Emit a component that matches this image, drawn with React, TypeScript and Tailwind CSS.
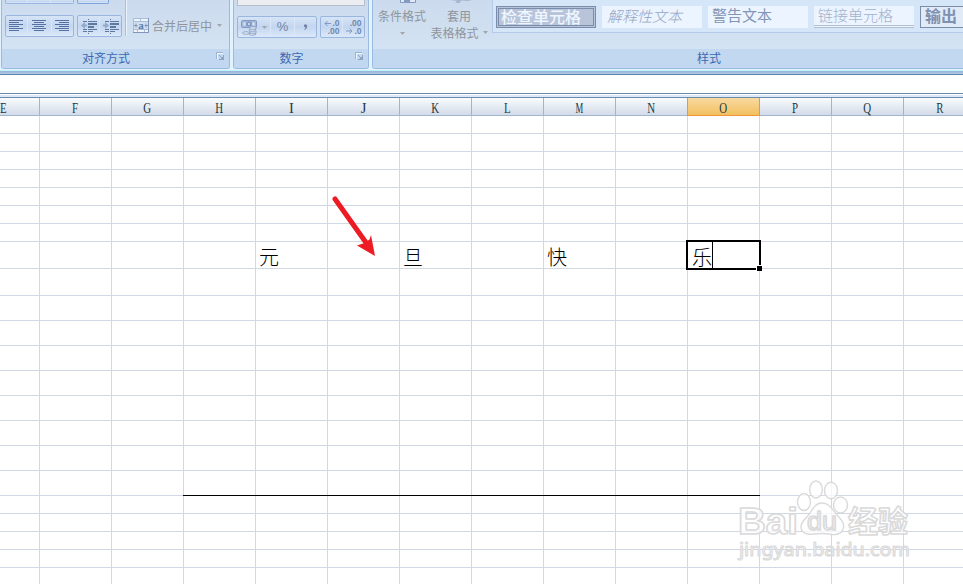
import React from "react";

const sans = "font-['Noto_Sans_CJK_SC',sans-serif]";

const columns = [
  { name: "E", width: "w-[40px]" },
  ..."FGHIJKLMNOPQ".split("").map((name) => ({ name, width: "w-[72px]" })),
  { name: "R", width: "w-[72px]" },
];

const rows = [
  ...Array(7).fill("h-[18px]"),
  "h-[27px]",
  "h-[27px]",
  ...Array(8).fill("h-[25px]"),
  ...Array(5).fill("h-[18px]"),
];

const greeting: Record<string, string> = { I: "元", K: "旦", M: "快", O: "乐" };

function Lines({ kind }: { kind: "left" | "center" | "right" }) {
  const widths = [14, 10, 14, 10, 14, 10];
  return (
    <svg width="16" height="13" viewBox="0 0 16 13" shapeRendering="crispEdges">
      {widths.map((w, i) => (
        <rect
          key={i}
          x={kind === "left" ? 0 : kind === "right" ? 14 - w : (14 - w) / 2}
          y={i * 2}
          width={w}
          height="1"
          fill="#56719f"
        />
      ))}
    </svg>
  );
}

function Indent({ outward }: { outward?: boolean }) {
  return (
    <svg width="16" height="15" viewBox="0 0 16 15" shapeRendering="crispEdges">
      <g fill="#5f799f">
        <path d="M2 2h4v1H2zM7 2h9v1H7zM7 4h9v2H7zM7 7h6v2H7zM2 10h4v1H2zM7 10h9v1H7zM2 12h4v1H2zM7 12h5v1H7z" />
        <path d="M7 0h1v1H7zM7 14h1v1H7z" />
      </g>
      <path
        d={outward ? "M0 6.500l4-3.500v2.500h2v2H4V10z" : "M6 6.500L2 3v2.500H0v2h2V10z"}
        fill="#93a8ca"
        shapeRendering="auto"
      />
    </svg>
  );
}

function MergeIcon() {
  return (
    <svg className="shrink-0" width="16" height="15" viewBox="0 0 16 15">
      <rect x=".5" y=".5" width="15" height="14" fill="#f0f5fc" stroke="#a9bcd9" />
      <path d="M0 3.500h16M0 11.500h16M7.500 0v3.500M4.500 11.500V15M11.500 11.500V15" stroke="#a9bcd9" />
      <rect x="1" y="4" width="14" height="7" fill="#d2dff1" />
      <path d="M1 7.500h3.500M3 5.500v4M15 7.500h-3.500M13 5.500v4" stroke="#7f96b9" />
      <path d="M15.500 0v14.500H0" fill="none" stroke="#7f96b9" />
      <text x="8" y="10.500" textAnchor="middle" fontFamily="Liberation Serif, serif" fontSize="11" fontWeight="bold" fill="#5f7aa4">a</text>
    </svg>
  );
}

function MoneyIcon() {
  return (
    <svg width="17" height="17" viewBox="0 0 17 17">
      <rect x=".5" y="1.500" width="15" height="7" rx="1" fill="#a3b7d8" stroke="#8499bf" />
      <ellipse cx="8" cy="5" rx="3" ry="2.500" fill="#8299c2" />
      <path d="M2.500 3.500h2v3h-2zM11.500 3.500h2v3h-2z" fill="#dbe6f5" />
      <path d="M7 4h2v2H7z" fill="#c3d2e8" />
      <g fill="#dce7f6" stroke="#8499bf" strokeWidth=".8">
        <ellipse cx="5" cy="14" rx="3.500" ry="1.300" />
        <ellipse cx="11.500" cy="15" rx="3.500" ry="1.300" />
        <ellipse cx="12" cy="13" rx="3.500" ry="1.300" />
        <ellipse cx="11.500" cy="11" rx="3.500" ry="1.300" />
        <ellipse cx="12" cy="9" rx="3.500" ry="1.300" />
      </g>
    </svg>
  );
}

function Decimals({ less }: { less?: boolean }) {
  return (
    <svg width="17" height="15" viewBox="0 0 17 15" fontFamily="Liberation Sans, sans-serif" fontSize="8.500" fontWeight="bold" fill="#7287aa">
      <text x="16.500" y="6" textAnchor="end">{less ? ".00" : ".0"}</text>
      <text x="16.500" y="14" textAnchor="end">{less ? ".0" : ".00"}</text>
      <path d={less ? "M1 11h6M4.500 8.500L7 11 4.500 13.500" : "M8 3.500H2M4.500 1L2 3.500 4.500 6"} fill="none" stroke="#8299c0" />
    </svg>
  );
}

function Caret({ className = "" }: { className?: string }) {
  return (
    <svg className={`shrink-0 ${className}`} width="5" height="3" viewBox="0 0 5 3">
      <path d="M0 0h5L2.500 3z" fill="#a3a5aa" />
    </svg>
  );
}

function Launcher() {
  return (
    <svg className="absolute right-[5px] top-[3px]" width="8" height="8" viewBox="0 0 8 8" shapeRendering="crispEdges">
      <path d="M.5 6.500v-6h6" fill="none" stroke="#9db4d1" />
      <path d="M1.500 6.500v-5h5" fill="none" stroke="#eef5fd" />
      <path d="M7.500 3v4.500H3" fill="none" stroke="#8da5c3" />
      <path d="M3 3h1v1H3zM4 4h1v1H4zM5 5h2v2H5z" fill="#8da5c3" />
    </svg>
  );
}

function ButtonGroup({ children, className }: { children: React.ReactNode; className: string }) {
  return (
    <div className={`flex shrink-0 rounded-[2px] border border-[#9ab6de] bg-linear-to-b from-[#d6e4f6] via-[#c3d6f0] to-[#dbe9f9] ${className}`}>
      {children}
    </div>
  );
}

const cellButton = "flex shrink-0 items-center justify-center";
const divider = "border-r border-[#dbe7f6]";

function Group({ title, className, launcher, children }: { title: string; className: string; launcher?: boolean; children: React.ReactNode }) {
  return (
    <section className={`flex h-[69px] shrink-0 flex-col overflow-hidden rounded-b-[3px] border border-t-0 border-[#9abbdf] bg-linear-to-b from-[#cbdaed] to-[#d8e7f5] ${className}`}>
      <div className="flex h-[49px] shrink-0">{children}</div>
      <div className={`relative flex h-[19px] shrink-0 items-center justify-center bg-[#c1d8f0] pb-[2px] text-[12px] leading-[17px] text-[#3c69b3] ${sans}`}>
        <span className={launcher ? "mr-[19px]" : "ml-[79px]"}>{title}</span>
        {launcher && <Launcher />}
      </div>
    </section>
  );
}

function AlignmentGroup() {
  return (
    <Group title="对齐方式" launcher className="ml-px w-[229px]">
      <div className="flex h-[36px] w-[124px] flex-col border-r border-[#a6c0e4] shadow-[1px_0_0_#eaf3fd]">
        <div className="ml-[3px] flex gap-[3px]">
          <ButtonGroup className="h-[4px] w-[69px] rounded-t-none border-t-0"><i className={`w-[22px] ${divider}`} /><i className={`w-[23px] ${divider}`} /></ButtonGroup>
          <ButtonGroup className="h-[4px] w-[32px] rounded-t-none border-t-0 !border-[#7da3da]">{null}</ButtonGroup>
        </div>
        <div className="ml-[3px] mt-[11px] flex gap-[3px]">
          <ButtonGroup className="h-[22px] w-[69px]">
            <span className={`w-[22px] ${cellButton} ${divider}`}><Lines kind="left" /></span>
            <span className={`w-[24px] ${cellButton} ${divider}`}><Lines kind="center" /></span>
            <span className={`w-[21px] ${cellButton}`}><Lines kind="right" /></span>
          </ButtonGroup>
          <ButtonGroup className="h-[22px] w-[45px]">
            <span className={`w-[22px] ${cellButton} ${divider}`}><Indent outward /></span>
            <span className={`w-[21px] ${cellButton}`}><Indent /></span>
          </ButtonGroup>
        </div>
      </div>
      <div className={`ml-[7px] mt-[15px] flex h-[21px] items-center text-[12px] leading-[17px] text-[#8f959d] ${sans}`}>
        <MergeIcon />
        <span className="-mt-px ml-[3px]">合并后居中</span>
        <Caret className="ml-[5px]" />
      </div>
    </Group>
  );
}

function NumberGroup() {
  return (
    <Group title="数字" launcher className="ml-[3px] w-[136px]">
      <div className="flex flex-col pl-[3px]">
        <div className="h-[6px] w-[128px] border border-t-0 border-[#b5bdc9] bg-[#ebedf0]" />
        <div className="mt-[10px] flex gap-[3px]">
          <ButtonGroup className="h-[22px] w-[80px]">
            <span className={`w-[33px] gap-[4px] ${cellButton} ${divider}`}><MoneyIcon /><Caret /></span>
            <span className={`w-[24px] font-['Liberation_Sans',sans-serif] text-[13px] text-[#7184a5] ${cellButton} ${divider}`}>%</span>
            <span className={`w-[21px] ${cellButton}`}>
              <svg width="5" height="7" viewBox="0 0 6 8"><path d="M1 2a2 2 0 1 1 4 0c0 3-1.500 4.500-3 5L1.500 6C3 5.500 3 4 2.500 3.700 1.500 3.500 1 3 1 2z" fill="#7184a5" /></svg>
            </span>
          </ButtonGroup>
          <ButtonGroup className="h-[22px] w-[45px]">
            <span className={`w-[22px] ${cellButton} ${divider}`}><Decimals /></span>
            <span className={`w-[21px] ${cellButton}`}><Decimals less /></span>
          </ButtonGroup>
        </div>
      </div>
    </Group>
  );
}

const swatch = "flex h-[22px] w-[100px] shrink-0 items-center whitespace-nowrap leading-[18px]";

function StylesGroup() {
  return (
    <Group title="样式" className="ml-[3px] w-[594px] rounded-r-none border-r-0">
      <div className={`flex w-[58px] shrink-0 flex-col items-center text-[12px] leading-[17px] text-[#8f959d] ${sans}`}>
        <svg className="ml-[12px]" width="16" height="3" viewBox="0 0 16 3"><path d="M.5 0v2.500h15V0" fill="#dfe8f4" stroke="#849abf" /><path d="M4 0h6v2H4z" fill="#849abf" /></svg>
        <span className="mt-[4px]">条件格式</span>
        <Caret className="mt-[8px]" />
      </div>
      <div className={`flex w-[56px] shrink-0 flex-col items-center text-[12px] leading-[17px] text-[#8f959d] ${sans}`}>
        <svg className="ml-[4px]" width="22" height="3" viewBox="0 0 22 3"><path d="M0 0h22l-4 1-7-.5L10 3H5l2-2z" fill="#a6b7d1" /></svg>
        <span className="mt-[4px]">套用</span>
        <span className="flex items-center whitespace-nowrap">表格格式<Caret className="ml-[4px]" /></span>
      </div>
      <div className={`ml-[5px] flex h-[33px] w-[474px] shrink-0 gap-[6px] overflow-hidden border-b border-l border-[#b4cce9] bg-[#d5e6f9] pl-[3px] pt-[6px] ${sans}`}>
        <div className={`${swatch} border border-[#7b8dab] bg-[#b7c4da] p-px`}>
          <div className="flex h-full w-full items-center border border-[#7b8dab] pb-[3px] pl-[2px] text-[16px] font-medium text-[#f0f6ff]">检查单元格</div>
        </div>
        <div className={`${swatch} bg-[#ebf4ff] pb-[3px] pl-[5px] text-[15px] font-light italic text-[#94a5c5]`}>解释性文本</div>
        <div className={`${swatch} bg-[#ebf4ff] pb-[4px] pl-[4px] text-[15px] text-[#8395b5]`}>警告文本</div>
        <div className={`${swatch} border-b-[3px] border-double border-[#b2bed2] bg-[#ebf4ff] pb-px pl-[4px] text-[15px] font-light text-[#a3b2cc]`}>链接单元格</div>
        <div className={`${swatch} border border-[#7b8dab] bg-[#e1ebf8] pb-[4px] pl-[4px] text-[16px] font-bold text-[#7e91b1]`}>输出</div>
      </div>
    </Group>
  );
}

function Cell({ name, width, row }: { name: string; width: string; row: number }) {
  const text = row === 7 ? greeting[name] : undefined;
  const active = row === 7 && name === "O";
  return (
    <div className={`relative flex shrink-0 items-center border-b border-r border-[#d0d7e5] pt-[3px] font-['Noto_Sans_CJK_SC',sans-serif] text-[20px] font-light leading-[20px] text-black ${active ? "z-10 pl-[4px]" : "pl-[3px]"} ${width}`}>
      {active && (
        <>
          <div className="absolute -left-[2px] -top-[2px] h-[30px] w-[75px] border-2 border-black" />
          <div className="absolute -bottom-[3px] -right-[3px] h-[6px] w-[6px] border-l border-t border-white bg-black" />
          <div className="absolute left-[24px] top-0 h-[26px] w-px bg-black" />
        </>
      )}
      {text && <span>{text}</span>}
    </div>
  );
}

function Watermark() {
  return (
    <svg
      className="absolute left-[735px] top-[475px]"
      width="180"
      height="92"
      viewBox="0 0 180 92"
      stroke="#dadadb"
      strokeWidth="1.400"
      strokeLinejoin="round"
      fill="#ffffff"
      fillOpacity=".75"
    >
      <ellipse cx="69" cy="27" rx="6.500" ry="8.500" />
      <ellipse cx="81" cy="14.500" rx="6.300" ry="8.500" />
      <ellipse cx="96" cy="15.500" rx="6.500" ry="8.300" />
      <ellipse cx="105.500" cy="30" rx="7" ry="8" />
      <path d="M87 28c7 0 10 6 15 12 5 5 8 9 6 14-2 7-9 6-14 5-5-.7-10-.7-15 0-7 1-13-1-13-7 0-6 5-8 9-14 3-5 6-10 12-10z" />
      <g fontFamily="Liberation Sans, sans-serif" fontWeight="bold" strokeWidth="1.600">
        <text x="3" y="58.500" fontSize="37" textLength="60" lengthAdjust="spacingAndGlyphs">Bai</text>
        <text x="72" y="55" fontSize="25" fontWeight="normal" textLength="30" lengthAdjust="spacingAndGlyphs">du</text>
        <text x="113" y="57" fontFamily="Noto Sans CJK SC, sans-serif" fontSize="30" textLength="60" lengthAdjust="spacingAndGlyphs">经验</text>
      </g>
      <text x="4" y="81" fontFamily="Noto Sans, sans-serif" fontSize="18" strokeWidth="1.100" textLength="171" lengthAdjust="spacingAndGlyphs">jingyan.baidu.com</text>
    </svg>
  );
}

export default function App() {
  return (
    <div className="relative flex h-[584px] w-[963px] flex-col overflow-hidden bg-white">
      <header className="flex h-[70px] shrink-0 bg-[#e2f2ff]">
        <AlignmentGroup />
        <NumberGroup />
        <StylesGroup />
      </header>
      <div className="h-[5px] shrink-0 border-b border-t border-b-[#6186ab] border-t-[#b9f4f8] bg-linear-to-b from-[#96b2d5] to-[#b3cae6]" />
      <div className="h-[19px] shrink-0 border-b border-[#6b8caf] bg-white" />
      <div className="h-[4px] shrink-0 border-b border-t border-b-[#6b8caf] border-t-white bg-[#dce8f6]" />
      <div className="flex h-[18px] shrink-0">
        {columns.map(({ name, width }) => (
          <div
            key={name}
            className={`flex shrink-0 items-center justify-center border-b border-r pt-[2px] font-['Liberation_Serif',serif] text-[14.5px] leading-[14px] text-[#203a40] ${width} ${
              name === "E" ? "pr-[32px]" : ""
            } ${
              name === "O"
                ? "border-[#f29536] bg-linear-to-b from-[#f9d99f] to-[#f1c15f] shadow-[-1px_0_0_#f29536]"
                : "border-[#9eb6ce] bg-linear-to-b from-[#f9fcfd] to-[#d3dbe9]"
            }`}
          >
            <span className={name === "I" || name === "J" ? "" : name === "M" ? "scale-x-[0.6]" : "scale-x-[0.75]"}>{name}</span>
          </div>
        ))}
      </div>
      <main>
        {rows.map((height, row) => (
          <div key={row} className={`flex ${height}`}>
            {columns.map(({ name, width }) => (
              <Cell key={name} name={name} width={width} row={row} />
            ))}
          </div>
        ))}
      </main>
      <div className="absolute left-[183px] top-[495px] h-px w-[577px] bg-black" />
      <svg className="absolute left-[330px] top-[194px]" width="48" height="64" viewBox="0 0 48 64">
        <path d="M5 5l32 45" stroke="#ed1c24" strokeWidth="5" strokeLinecap="round" />
        <path d="M45 62L27 51.500 34.500 49 39.500 45.500 41 41z" fill="#ed1c24" />
      </svg>
      <Watermark />
    </div>
  );
}
